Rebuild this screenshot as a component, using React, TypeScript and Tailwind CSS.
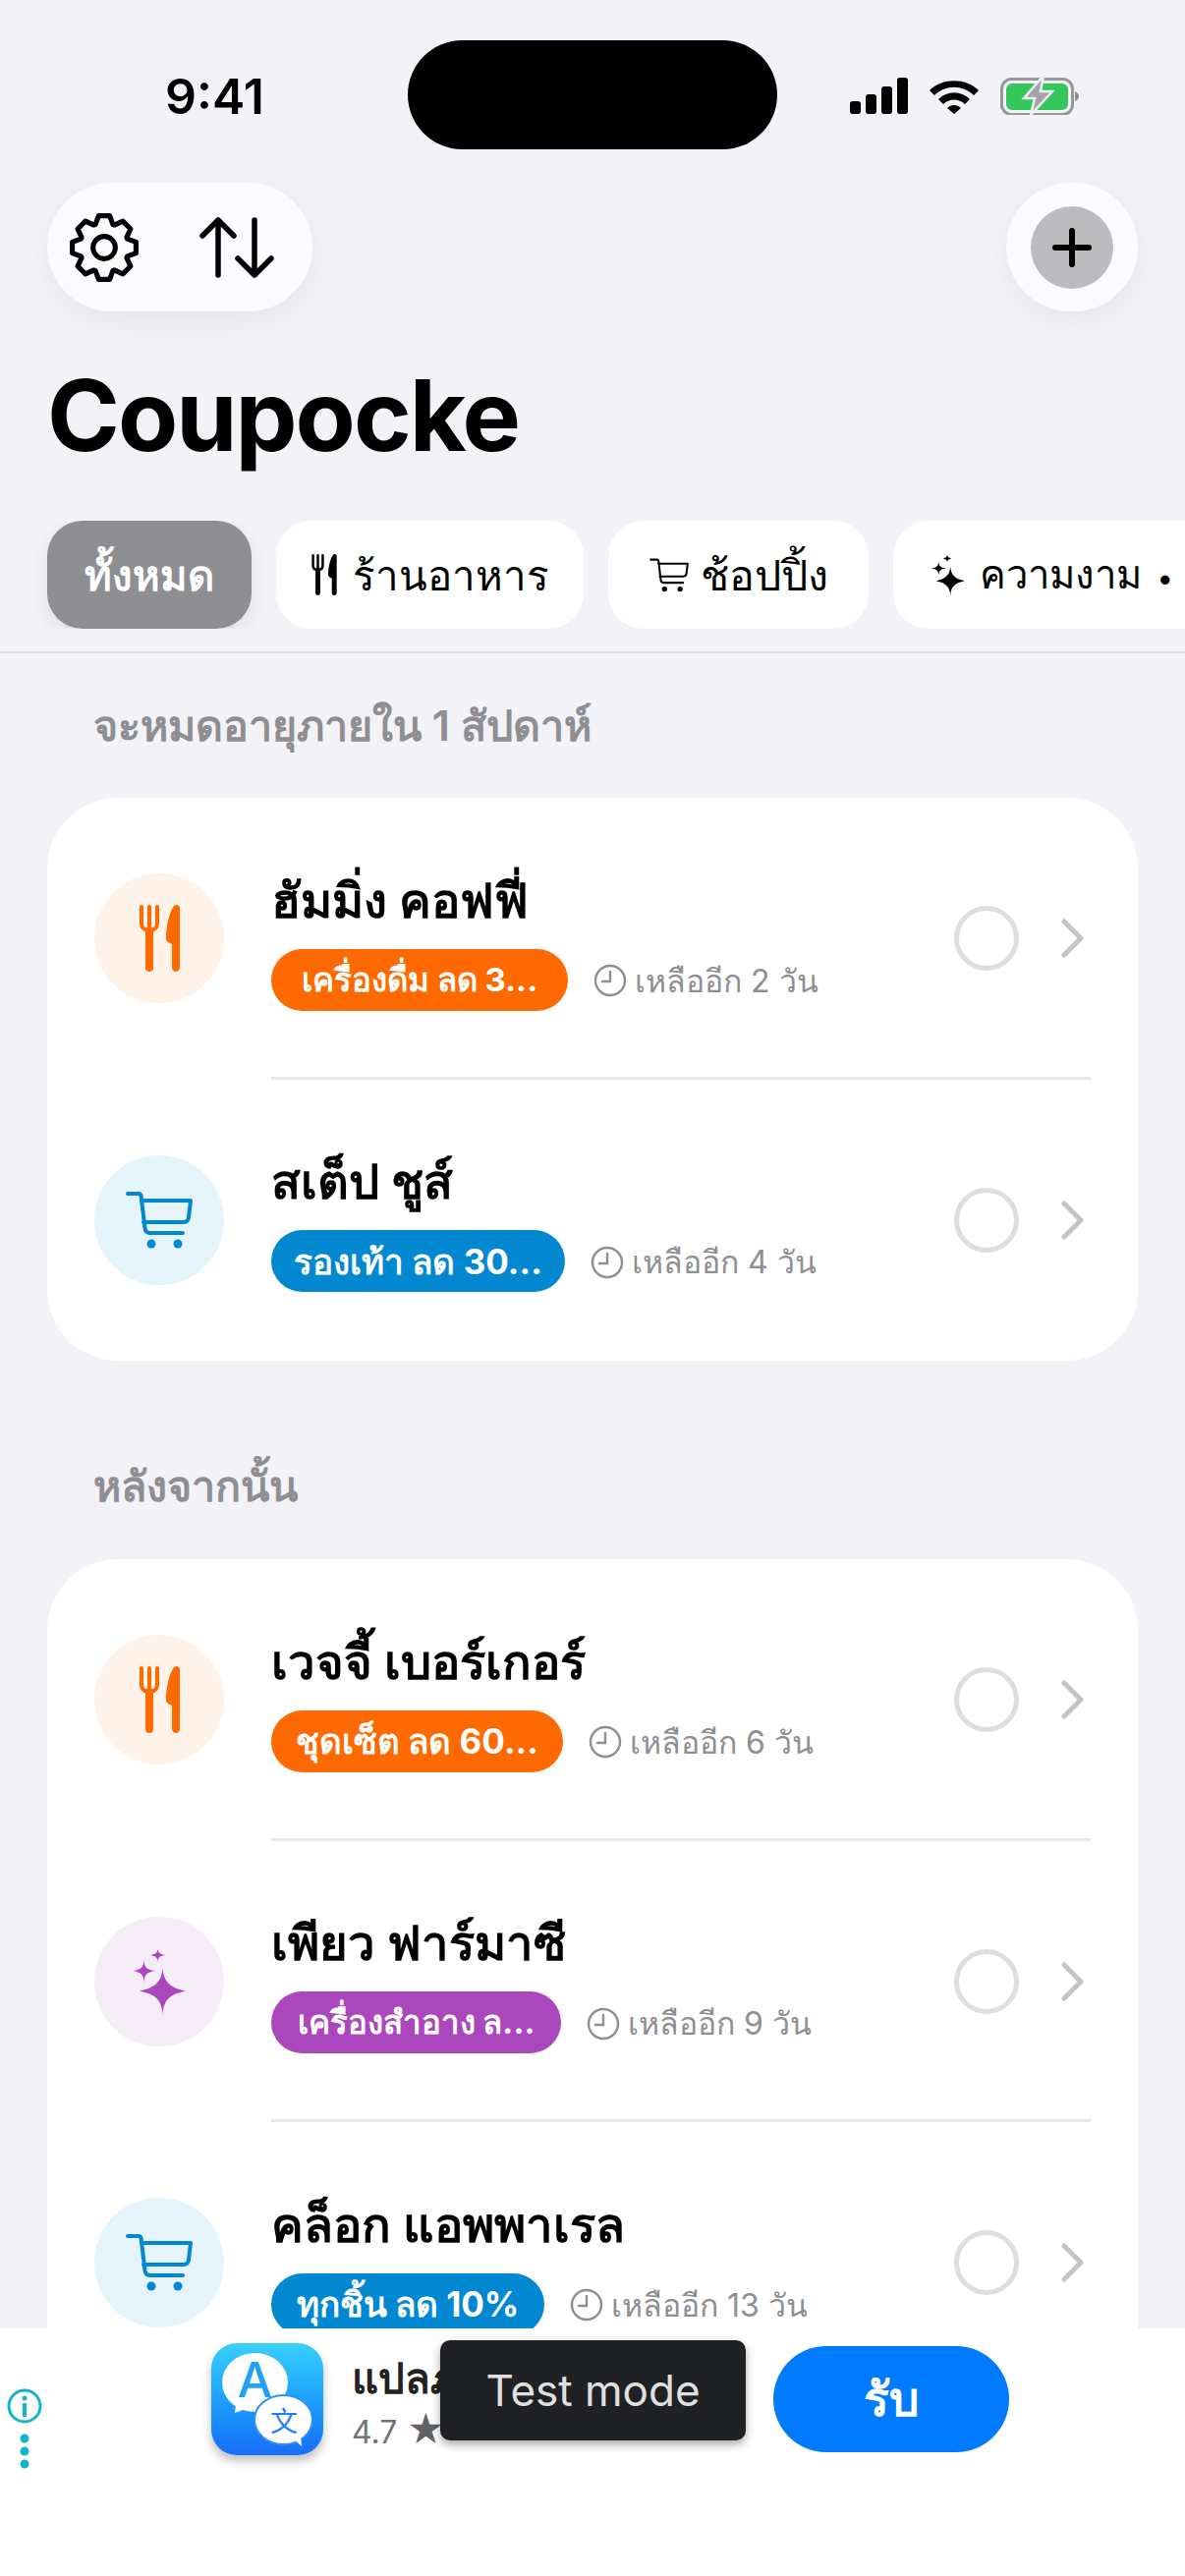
const FONT = "font-['Inter','Noto_Sans','Noto_Sans_CJK_SC',sans-serif]"

function gearPath() {
  const pts: string[] = []
  const cx = 35
  const cy = 35
  for (let i = 0; i < 8; i++) {
    const a = (i * Math.PI) / 4 - Math.PI / 2
    const list: [number, number][] = [
      [24.5, a - 0.36],
      [32, a - 0.17],
      [32, a + 0.17],
      [24.5, a + 0.36],
    ]
    for (const [r, t] of list) {
      pts.push(`${(cx + r * Math.cos(t)).toFixed(2)} ${(cy + r * Math.sin(t)).toFixed(2)}`)
    }
  }
  return `M${pts.join('L')}Z`
}

const GEAR = gearPath()

function ForkKnife({ className }: { className?: string }) {
  return (
    <svg viewBox="0 0 41 68" className={className} fill="none">
      <path d="M2 2v17c0 4 3 7 8 7s8-3 8-7V2M10 2v24" stroke="currentColor" strokeWidth="4" strokeLinecap="round" />
      <path d="M10 26v38" stroke="currentColor" strokeWidth="8" strokeLinecap="round" />
      <path d="M37 0c2 0 4 1 4 3v61c0 2-2 4-4 4s-4-2-4-4V40c-3-1-6-3-6-6C27 18 33 0 37 0z" fill="currentColor" />
    </svg>
  )
}

function Sparkles({ className }: { className?: string }) {
  return (
    <svg viewBox="0 0 54 67" className={className} fill="currentColor">
      <path d="M30.500 20c1 13 6 20 23.500 23.500C36.500 47 31.500 54 30.500 67c-1-13-6-20-23.500-23.500C24.500 40 29.500 33 30.500 20z" />
      <path d="M11.500 12c.5 7 2.500 10 11.500 11-9 1.500-11 4-11.500 11.500C11 27 9 24.500 0 23c9-1 11-4 11.500-11z" />
      <path d="M25.500 0c.3 4.500 1.600 6 7.500 7-5.900 1-7.200 2.500-7.500 7-.3-4.500-1.600-6-7.500-7 5.900-1 7.200-2.500 7.500-7z" />
    </svg>
  )
}

function Cart({ className, stroke = 4 }: { className?: string; stroke?: number }) {
  return (
    <svg viewBox="0 0 68 58" className={className} fill="none" stroke="currentColor" strokeWidth={stroke} strokeLinecap="round" strokeLinejoin="round">
      <path d="M2 2h11c1.500 0 2.400.8 2.600 2.200L19.500 37c.3 3 2 5 5 5H58" />
      <path d="M16 9h50l-2 17c-.4 3-2 5-5 5H18" />
      <circle cx="26" cy="53" r="4.500" fill="currentColor" stroke="none" />
      <circle cx="53" cy="53" r="4.500" fill="currentColor" stroke="none" />
    </svg>
  )
}

function Clock() {
  return (
    <svg viewBox="0 0 34 34" className="w-[34px] h-[34px] shrink-0 text-[#8e8e93]" fill="none" stroke="currentColor" strokeWidth="2.400" strokeLinecap="round">
      <circle cx="17" cy="17" r="15" />
      <path d="M17 8v10h-8" />
    </svg>
  )
}

type Row = {
  kind: 'food' | 'shop' | 'beauty'
  title: string
  pill: string
  pillW: string
  pillText: string
  days: string
}

const weekRows: Row[] = [
  { kind: 'food', title: 'ฮัมมิ่ง คอฟฟี่', pill: 'เครื่องดื่ม ลด 3...', pillW: 'w-[302px]', pillText: 'text-[33px]', days: 'เหลืออีก 2 วัน' },
  { kind: 'shop', title: 'สเต็ป ชูส์', pill: 'รองเท้า ลด 30...', pillW: 'w-[299px]', pillText: 'text-[35px]', days: 'เหลืออีก 4 วัน' },
]

const laterRows: Row[] = [
  { kind: 'food', title: 'เวจจี้ เบอร์เกอร์', pill: 'ชุดเซ็ต ลด 60...', pillW: 'w-[297px]', pillText: 'text-[35px]', days: 'เหลืออีก 6 วัน' },
  { kind: 'beauty', title: 'เพียว ฟาร์มาซี', pill: 'เครื่องสำอาง ล...', pillW: 'w-[295px]', pillText: 'text-[33px]', days: 'เหลืออีก 9 วัน' },
  { kind: 'shop', title: 'คล็อก แอพพาเรล', pill: 'ทุกชิ้น ลด 10%', pillW: 'w-[278px]', pillText: 'text-[35px]', days: 'เหลืออีก 13 วัน' },
]

function CouponRow({ row, last }: { row: Row; last: boolean }) {
  const pillColor = row.kind === 'food' ? 'bg-[#ff6a00]' : row.kind === 'shop' ? 'bg-[#0288d1]' : 'bg-[#ab47bc]'
  const circle = row.kind === 'food' ? 'bg-[#fff2e8]' : row.kind === 'shop' ? 'bg-[#e5f3fa]' : 'bg-[#f6ecf8]'
  return (
    <div className="flex h-[286.500px] items-center pl-[48px] pr-[55px] relative">
      <div className={`w-[132px] h-[132px] rounded-full flex items-center justify-center shrink-0 ${circle}`}>
        {row.kind === 'food' && <ForkKnife className="w-[41px] h-[68px] text-[#ff6a00]" />}
        {row.kind === 'shop' && <Cart className="w-[68px] h-[58px] text-[#0288d1]" />}
        {row.kind === 'beauty' && <Sparkles className="w-[54px] h-[67px] text-[#ab47bc]" />}
      </div>
      <div className="ml-[48px] flex-1 min-w-0 pt-[5px]">
        <div className="text-[49px] leading-[60px] font-semibold text-black whitespace-nowrap">{row.title}</div>
        <div className="flex items-center mt-[19px]">
          <div className={`h-[63px] rounded-full flex items-center justify-center text-white font-bold whitespace-nowrap ${pillColor} ${row.pillW} ${row.pillText}`}>
            {row.pill}
          </div>
          <div className="ml-[26px] mt-[2px]"><Clock /></div>
          <div className="ml-[8px] mt-[3px] text-[32px] text-[#8e8e93] whitespace-nowrap">{row.days}</div>
        </div>
      </div>
      <div className="w-[66px] h-[66px] rounded-full border-[5px] border-[#dedee0] shrink-0" />
      <svg viewBox="0 0 24 40" className="w-[24px] h-[40px] ml-[42px] text-[#c4c4c7] shrink-0" fill="none" stroke="currentColor" strokeWidth="5" strokeLinecap="round" strokeLinejoin="round">
        <path d="M4 3l17 17L4 37" />
      </svg>
      {!last && <div className="absolute left-[228px] right-[48px] bottom-0 h-[3px] bg-[#e8e8ea]" />}
    </div>
  )
}

export default function App() {
  return (
    <div className={`w-[1206px] h-[2622px] flex flex-col overflow-hidden relative bg-[#f2f2f7] ${FONT}`}>
      <div className="flex-1 min-h-0 overflow-hidden">
        {/* status bar */}
        <div className="h-[186px] relative">
          <div className="absolute left-[168px] top-[66px] text-[50px] leading-[64px] font-semibold text-black">9:41</div>
          <div className="absolute left-[415px] top-[41px] w-[376px] h-[111px] rounded-full bg-black" />
          <div className="absolute left-[865px] top-[78px] flex items-end gap-[5px] h-[38px]">
            <div className="w-[11px] h-[13px] rounded-[3px] bg-black" />
            <div className="w-[11px] h-[20px] rounded-[3px] bg-black" />
            <div className="w-[11px] h-[28px] rounded-[3px] bg-black" />
            <div className="w-[11px] h-[37px] rounded-[3px] bg-black" />
          </div>
          <svg viewBox="0 0 52 38" className="absolute left-[945px] top-[78px] w-[52px] h-[38px]">
            <path d="M1 14C14 1 38 1 51 14l-5 5C35 8 17 8 6 19z M10 23c9-9 23-9 32 0l-5 5c-6-6-16-6-22 0z M19 32c4-4 10-4 14 0l-7 6z" fill="#000" />
          </svg>
          <svg viewBox="0 0 82 40" className="absolute left-[1018px] top-[77px] w-[82px] h-[40px]">
            <rect x="1.500" y="3.500" width="72" height="36" rx="10" fill="none" stroke="#98989c" strokeWidth="3" />
            <rect x="6" y="8" width="63" height="27" rx="6" fill="#34c759" />
            <path d="M76 16c3 1 4 3 4 5s-1 4-4 5z" fill="#8e8e93" />
            <path d="M44 0L24 23h11l-4 17 22-24H41z" fill="#a5a5a9" stroke="#f0f0f4" strokeWidth="2.500" />
          </svg>
        </div>

        {/* toolbar */}
        <div className="flex items-center justify-between px-[48px]">
          <div className="w-[270px] h-[131px] rounded-full bg-[#fbfbff] shadow-[0_10px_40px_rgba(0,0,0,0.06)] flex items-center pl-[22px] gap-[61px]">
            <svg viewBox="0 0 70 70" className="w-[72px] h-[72px]" fill="none" stroke="#000" strokeWidth="5" strokeLinejoin="round">
              <path d={GEAR} />
              <circle cx="35" cy="35" r="11" />
            </svg>
            <svg viewBox="0 0 76 62" className="w-[76px] h-[62px]" fill="none" stroke="#000" strokeWidth="5.500" strokeLinecap="round" strokeLinejoin="round">
              <path d="M19 59V3M3 19L19 3l16 16" />
              <path d="M56 3v56M39 42l17 17 17-17" />
            </svg>
          </div>
          <div className="w-[134px] h-[131px] rounded-full bg-[#fbfbff] shadow-[0_10px_40px_rgba(0,0,0,0.06)] flex items-center justify-center">
            <div className="w-[84px] h-[84px] rounded-full bg-[#bcbcbf] flex items-center justify-center">
              <svg viewBox="0 0 40 40" className="w-[40px] h-[40px]" fill="none" stroke="#000" strokeWidth="6" strokeLinecap="round">
                <path d="M20 3v34M3 20h34" />
              </svg>
            </div>
          </div>
        </div>

        {/* title */}
        <h1 className="px-[48px] mt-[46px] text-[100px] leading-[120px] font-bold text-black tracking-[-2px]">Coupocke</h1>

        {/* chips */}
        <div className="flex gap-[25px] pl-[48px] mt-[47px] overflow-hidden">
          <div className="h-[110px] w-[208px] shrink-0 rounded-[36px] bg-[#8e8e93] shadow-[0_8px_24px_rgba(0,0,0,0.08)] flex items-center justify-center text-white text-[42px] font-semibold">ทั้งหมด</div>
          <div className="h-[110px] w-[313px] shrink-0 rounded-[36px] bg-white flex items-center justify-center gap-[16px] text-[42px] text-black">
            <ForkKnife className="w-[26px] h-[42px]" />
            ร้านอาหาร
          </div>
          <div className="h-[110px] w-[265px] shrink-0 rounded-[36px] bg-white flex items-center justify-center gap-[12px] text-[43px] text-black">
            <Cart className="w-[40px] h-[35px]" stroke={3.500} />
            ช้อปปิ้ง
          </div>
          <div className="h-[110px] w-[340px] shrink-0 rounded-[36px] bg-white flex items-center pl-[39px] gap-[15px] text-[40px] text-black whitespace-nowrap">
            <Sparkles className="w-[34px] h-[42px]" />
            <span>ความงาม <span className="text-[30px] ml-[4px]">•</span></span>
          </div>
        </div>
        <div className="h-[2px] bg-[#dcdce0] mt-[23px]" />

        {/* lists */}
        <div className="px-[48px]">
          <div className="pl-[47px] mt-[43px] h-[60px] text-[43px] leading-[60px] font-semibold text-[#8e8e93]">จะหมดอายุภายใน 1 สัปดาห์</div>
          <div className="mt-[44px] rounded-[72px] bg-white">
            {weekRows.map((r, i) => <CouponRow key={r.title} row={r} last={i === weekRows.length - 1} />)}
          </div>
          <div className="pl-[47px] mt-[97px] h-[60px] text-[43px] leading-[60px] font-semibold text-[#8e8e93]">หลังจากนั้น</div>
          <div className="mt-[45px] rounded-t-[72px] bg-white">
            {laterRows.map((r, i) => <CouponRow key={r.title} row={r} last={i === laterRows.length - 1} />)}
          </div>
        </div>
      </div>

      {/* ad banner */}
      <div className="h-[252px] shrink-0 bg-white relative flex items-start">
        <div className="w-[215px] shrink-0 relative h-full">
          <svg viewBox="0 0 38 90" className="absolute left-[6px] top-[60px] w-[38px] h-[90px]">
            <circle cx="19" cy="19" r="16" fill="none" stroke="#12b5cb" strokeWidth="3" />
            <circle cx="19" cy="11" r="2.500" fill="#12b5cb" />
            <rect x="17" y="16" width="4" height="14" fill="#12b5cb" />
            <circle cx="19" cy="52" r="4.500" fill="#12b5cb" />
            <circle cx="19" cy="65" r="4.500" fill="#12b5cb" />
            <circle cx="19" cy="78" r="4.500" fill="#12b5cb" />
          </svg>
        </div>
        <div className="w-[114px] h-[114px] shrink-0 mt-[15px] rounded-[26px] bg-gradient-to-b from-[#38d0fb] to-[#1b6cf8] shadow-[0_6px_10px_rgba(0,0,0,0.25)] relative overflow-hidden">
          <svg viewBox="0 0 114 114" className="absolute inset-0 w-full h-full">
            <ellipse cx="44.500" cy="40" rx="33.500" ry="30" fill="#fff" />
            <path d="M25 62l-1 9 16-6z" fill="#fff" />
            <ellipse cx="73.500" cy="78" rx="29.500" ry="25" fill="#fff" stroke="#2a90fb" strokeWidth="2" />
            <path d="M84 98l8 7-1-11z" fill="#fff" />
            <text x="44.500" y="55" textAnchor="middle" fontSize="50" fontFamily="Inter" fontWeight="500" fill="#21a0fb">A</text>
            <text x="74" y="90" textAnchor="middle" fontSize="28" fontFamily="'Noto Sans CJK SC'" fill="#2080fa">文</text>
          </svg>
        </div>
        <div className="ml-[29px] mt-[25px]">
          <div className="text-[42px] leading-[52px] font-bold text-[#222] whitespace-nowrap">แปลภาษา</div>
          <div className="text-[32px] leading-[40px] mt-[6px] text-[#70757a] whitespace-nowrap">4.7 <span className="text-[38px] leading-[40px] text-[#5f6368]">★</span></div>
        </div>
        <div className="absolute left-[787px] top-[18px] w-[240px] h-[108px] rounded-full bg-[#007aff] flex items-center justify-center text-white text-[48px] font-bold">รับ</div>
        <div className="absolute left-[448px] top-[12px] w-[311px] h-[102px] rounded-[10px] bg-[#202124] shadow-[0_4px_10px_rgba(0,0,0,0.35)] flex items-center justify-center text-[#e0e0e0] text-[44px]">Test mode</div>
      </div>
    </div>
  )
}
